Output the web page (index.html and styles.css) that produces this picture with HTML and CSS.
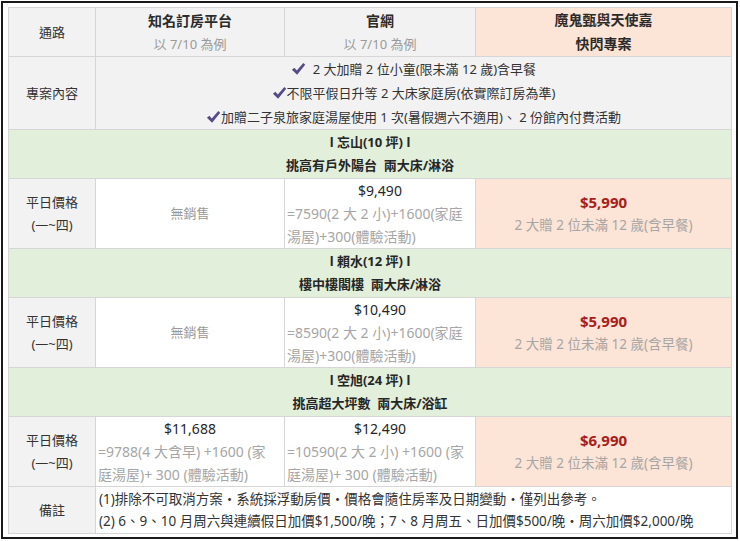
FILE: index.html
```html
<!DOCTYPE html>
<html lang="zh-Hant">
<head>
<meta charset="utf-8">
<link rel="stylesheet" href="styles.css">
</head>
<body>
<div class="frame">
<table class="plan">
  <colgroup>
    <col class="c1"><col class="c2"><col class="c3"><col class="c4">
  </colgroup>
  <tr class="r-head">
    <td class="label">通路</td>
    <td class="head"><b>知名訂房平台</b><span class="sub">以 7/10 為例</span></td>
    <td class="head"><b>官網</b><span class="sub">以 7/10 為例</span></td>
    <td class="head promo"><b>魔鬼甄與天使嘉</b><b>快閃專案</b></td>
  </tr>
  <tr class="r-content">
    <td class="label">專案內容</td>
    <td class="content" colspan="3">
      <span class="line"><svg class="chk" viewBox="0 0 14 14"><path d="M0.4 7.8 L2.9 5.7 L5.3 8.4 L11.8 1 L13.7 2.7 L5.6 12.8 Z"/></svg>&nbsp; 2 大加贈 2 位小童(限未滿 12 歲)含早餐</span>
      <span class="line"><svg class="chk" viewBox="0 0 14 14"><path d="M0.4 7.8 L2.9 5.7 L5.3 8.4 L11.8 1 L13.7 2.7 L5.6 12.8 Z"/></svg>不限平假日升等 2 大床家庭房(依實際訂房為準)</span>
      <span class="line"><svg class="chk" viewBox="0 0 14 14"><path d="M0.4 7.8 L2.9 5.7 L5.3 8.4 L11.8 1 L13.7 2.7 L5.6 12.8 Z"/></svg>加贈二子泉旅家庭湯屋使用 1 次(暑假週六不適用)、 2 份館內付費活動</span>
    </td>
  </tr>

  <tr class="r-room">
    <td class="room" colspan="4"><span class="line">l 忘山(10 坪) l</span><span class="line">挑高有戶外陽台&nbsp; 兩大床/淋浴</span></td>
  </tr>
  <tr class="r-price">
    <td class="label">平日價格<br>(一~四)</td>
    <td class="none">無銷售</td>
    <td class="price"><span class="amt">$9,490</span><span class="det">=7590(2 大 2 小)+1600(家庭</span><span class="det">湯屋)+300(體驗活動)</span></td>
    <td class="promo deal"><span class="red">$5,990</span><span class="sub">2 大贈 2 位未滿 12 歲(含早餐)</span></td>
  </tr>

  <tr class="r-room">
    <td class="room" colspan="4"><span class="line">l 賴水(12 坪) l</span><span class="line">樓中樓閣樓&nbsp; 兩大床/淋浴</span></td>
  </tr>
  <tr class="r-price">
    <td class="label">平日價格<br>(一~四)</td>
    <td class="none">無銷售</td>
    <td class="price"><span class="amt">$10,490</span><span class="det">=8590(2 大 2 小)+1600(家庭</span><span class="det">湯屋)+300(體驗活動)</span></td>
    <td class="promo deal"><span class="red">$5,990</span><span class="sub">2 大贈 2 位未滿 12 歲(含早餐)</span></td>
  </tr>

  <tr class="r-room">
    <td class="room" colspan="4"><span class="line">l 空旭(24 坪) l</span><span class="line">挑高超大坪數&nbsp; 兩大床/浴缸</span></td>
  </tr>
  <tr class="r-price">
    <td class="label">平日價格<br>(一~四)</td>
    <td class="price"><span class="amt">$11,688</span><span class="det">=9788(4 大含早) +1600 (家</span><span class="det">庭湯屋)+ 300 (體驗活動)</span></td>
    <td class="price"><span class="amt">$12,490</span><span class="det">=10590(2 大 2 小) +1600 (家</span><span class="det">庭湯屋)+ 300 (體驗活動)</span></td>
    <td class="promo deal"><span class="red">$6,990</span><span class="sub">2 大贈 2 位未滿 12 歲(含早餐)</span></td>
  </tr>

  <tr class="r-note">
    <td class="label">備註</td>
    <td class="note" colspan="3"><span class="line">(1)排除不可取消方案・系統採浮動房價・價格會隨住房率及日期變動・僅列出參考。</span><span class="line">(2) 6、9、10 月周六與連續假日加價$1,500/晚；7、8 月周五、日加價$500/晚・周六加價$2,000/晚</span></td>
  </tr>
</table>
</div>
</body>
</html>
```

FILE: styles.css
```css
html, body {
  margin: 0;
  padding: 0;
  background: #ffffff;
}
body {
  font-family: "Noto Sans", "Noto Sans CJK TC", sans-serif;
  font-size: 13px;
  color: #333333;
}
.frame {
  box-sizing: border-box;
  margin: 1px;
  width: 737px;
  height: 538px;
  border: 2px solid #1a1a1a;
  padding: 4px 5px 0 5px;
}
.plan {
  border-collapse: collapse;
  table-layout: fixed;
  width: 723px;
  border: 1px solid #c8c8c8;
}
.c1 { width: 87px; }
.c2 { width: 189px; }
.c3 { width: 191px; }
.c4 { width: 256px; }

.plan td {
  border: 1px solid #d6d6d6;
  padding: 0;
  line-height: 23px;
  vertical-align: middle;
  text-align: center;
}
.r-head td { height: 45px; }
.r-content td { height: 72px; }
.r-room td { height: 48px; }
.r-price td { height: 68px; }
.r-note td { height: 46px; }

.label {
  background: #f2f2f2;
  color: #333333;
}
.head {
  background: #f2f2f2;
}
.head b {
  display: block;
  font-size: 14px;
  font-weight: 700;
  color: #2b2b2b;
  line-height: 24px;
}
.head .sub {
  display: block;
  line-height: 23px;
}
.sub {
  color: #9a9a9a;
}
.promo {
  background: #fce4d6;
}
.plan td.head.promo { background: #fce4d6; }

.content {
  background: #f2f2f2;
}
.content .line { line-height: 24px; }
.line {
  display: block;
  white-space: nowrap;
}
.chk {
  width: 15px;
  height: 14px;
  fill: #564b87;
  vertical-align: -2px;
}

.room {
  background: #e2efda;
  font-weight: 700;
  color: #262626;
}
.none {
  color: #9a9a9a;
  background: #ffffff;
}
.price {
  background: #ffffff;
  text-align: left;
}
.plan td.price { text-align: left; }
.price .amt {
  display: block;
  text-align: center;
  font-size: 14px;
  color: #262626;
}
.price .det {
  display: block;
  padding-left: 2px;
  font-size: 14px;
  color: #a6a6a6;
  white-space: nowrap;
}
.deal .red {
  display: block;
  font-size: 15px;
  font-weight: 700;
  color: #a8201a;
}
.deal .sub {
  display: block;
  font-size: 13.5px;
  color: #a6a6a6;
}
.note {
  background: #ffffff;
}
.plan td.note {
  text-align: left;
  padding-left: 3px;
  font-size: 13.5px;
  line-height: 22px;
}
```
